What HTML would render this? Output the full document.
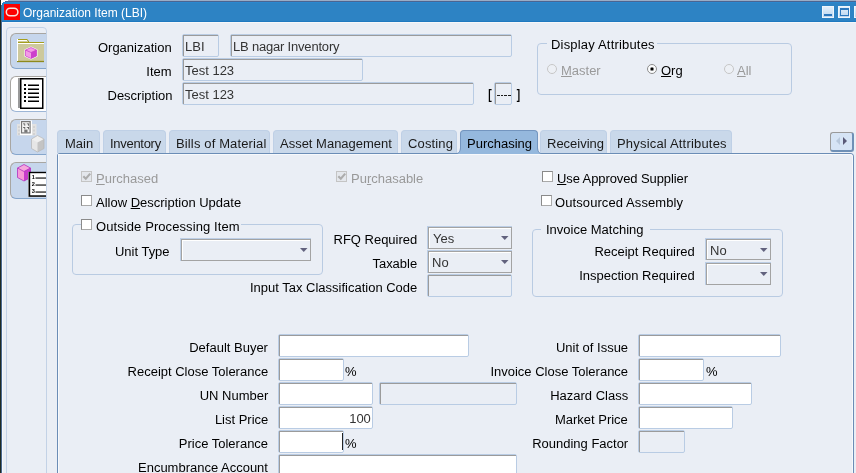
<!DOCTYPE html>
<html><head><meta charset="utf-8"><style>
html,body{margin:0;padding:0;}
body{width:856px;height:473px;overflow:hidden;position:relative;background:#eaeef5;font-family:"Liberation Sans", sans-serif;}
#root{position:absolute;left:0;top:0;width:856px;height:473px;overflow:hidden;will-change:transform;}
#root>div,#root>svg{position:absolute;box-sizing:content-box;}
.t{white-space:nowrap;line-height:1;}
.fo{border:1px solid #b9cce4;border-radius:2px;}
u{text-decoration:underline;text-underline-offset:1px;}
</style></head><body><div id="root">
<div style="left:0px;top:0px;width:856px;height:1px;background:#9aacc6"></div>
<div style="left:0px;top:1px;width:856px;height:1px;background:#4a6592"></div>
<div style="left:0px;top:2px;width:856px;height:19px;background:#2d83c4"></div>
<div style="left:0px;top:2px;width:856px;height:1px;background:#2a88d0"></div>
<div style="left:0px;top:21px;width:856px;height:1px;background:#1f79c0"></div>
<div style="left:0px;top:22px;width:856px;height:1px;background:#f6f7f9"></div>
<div style="left:0px;top:4px;width:1px;height:469px;background:#1f2a22"></div>
<div style="left:1px;top:4px;width:1px;height:469px;background:#4a6890"></div>
<div style="left:2px;top:23px;width:1px;height:450px;background:#f5f8fc"></div>
<svg style="position:absolute;left:0;top:0" width="8" height="5"><path d="M0 0H8V1H5V2H3V3H2V5H1V4H0Z" fill="#fff"/><path d="M0 0V5H1V0Z" fill="#1f2a22"/></svg>
<div style="left:4px;top:4px;width:16px;height:16px;background:#fc0000"></div>
<svg style="position:absolute;left:4px;top:4px" width="16" height="16"><rect x="2.3" y="4.2" width="11.6" height="7.6" rx="3.8" fill="none" stroke="#f6e2dc" stroke-width="1.5"/></svg>
<div class="t" style="left:23px;top:7.34px;font-size:12px;color:#fff;">Organization Item (LBI)</div>
<div style="left:822px;top:6px;width:12px;height:12px;background:linear-gradient(#e6f1fb,#b8d4ef);box-shadow:inset 0 0 0 1px #eef5fc"></div>
<div style="left:838px;top:6px;width:12px;height:12px;background:linear-gradient(#e6f1fb,#b8d4ef);box-shadow:inset 0 0 0 1px #eef5fc"></div>
<div style="left:854px;top:6px;width:12px;height:12px;background:linear-gradient(#e6f1fb,#b8d4ef);box-shadow:inset 0 0 0 1px #eef5fc"></div>
<div style="left:824px;top:14px;width:8px;height:2px;background:#2d78bd"></div>
<div style="left:840px;top:8px;width:9px;height:8px;border:1px solid #2d78bd;border-top-width:2px;box-sizing:border-box"></div>
<div style="left:6px;top:27px;width:39px;height:460px;border:1px solid #c3d2e6;border-radius:4px"></div>
<div style="left:10px;top:33px;width:37px;height:36px;background:#c6d6ec;border:1px solid #a8a6a2;border-right:none;border-bottom:1px solid #86a6cc;border-radius:6px 0 0 6px;box-sizing:border-box"></div>
<div style="left:10px;top:76px;width:37px;height:36px;background:#ffffff;border:1px solid #a8a6a2;border-right:none;border-bottom:1px solid #9db6d6;border-radius:6px 0 0 6px;box-sizing:border-box"></div>
<div style="left:10px;top:119px;width:37px;height:36px;background:#c6d6ec;border:1px solid #a8a6a2;border-right:none;border-bottom:1px solid #86a6cc;border-radius:6px 0 0 6px;box-sizing:border-box"></div>
<div style="left:10px;top:162px;width:37px;height:37px;background:#c6d6ec;border:1px solid #a8a6a2;border-right:none;border-bottom:1px solid #86a6cc;border-radius:6px 0 0 6px;box-sizing:border-box"></div>
<svg style="position:absolute;left:16px;top:38px" width="30" height="26">
<path d="M1 1H11L13 4H28V24H1Z" fill="#cdc99c"/>
<path d="M1 1.5H11.2L13.2 4.5" fill="none" stroke="#a59f1e" stroke-width="1"/>
<path d="M1 2.5H11" stroke="#fff" stroke-width="1"/>
<path d="M1 4.5H28" stroke="#a59f1e" stroke-width="1"/>
<path d="M1 5.5H28" stroke="#fff" stroke-width="1"/>
<path d="M1 23.5H28" stroke="#8e891c" stroke-width="1.3"/>
<path d="M1.5 1V23" stroke="#fff" stroke-width="1"/>
<path d="M8.5 11.5L15 8.5L21.5 11.5V18.5L15 21.5L8.5 18.5Z" fill="#fff"/>
<path d="M9.5 12L15 9.5L20.5 12V18L15 20.5L9.5 18Z" fill="#f39be6"/>
<path d="M15 14.5V20.5L20.5 18V12Z" fill="#cc3fcc"/>
<path d="M9.5 12L15 14.5L20.5 12" fill="none" stroke="#cc3fcc" stroke-width="0.8"/>
<path d="M9.5 12L15 9.5L20.5 12V18L15 20.5L9.5 18Z" fill="none" stroke="#c83cc8" stroke-width="0.7"/>
</svg>
<svg style="position:absolute;left:17px;top:77px" width="28" height="33">
<rect x="1" y="1" width="2" height="30" fill="#9a9a9a"/>
<rect x="3.75" y="1.75" width="22" height="29.5" fill="#fff" stroke="#000" stroke-width="1.5"/>
<g fill="#000"><rect x="7" y="7" width="2" height="2"/><rect x="7" y="11" width="2" height="2"/><rect x="7" y="15" width="2" height="2"/><rect x="7" y="19" width="2" height="2"/><rect x="7" y="23" width="2" height="2"/>
<rect x="11" y="7.5" width="11" height="1.5"/><rect x="11" y="11.5" width="11" height="1.5"/><rect x="11" y="15.5" width="11" height="1.5"/><rect x="11" y="19.5" width="11" height="1.5"/><rect x="11" y="23.5" width="11" height="1.5"/></g>
</svg>
<svg style="position:absolute;left:16px;top:120px" width="30" height="34">
<rect x="1" y="4" width="19.5" height="11.5" fill="#e2e2e2"/>
<g fill="#d2d2d2"><rect x="2" y="6" width="2" height="2"/><rect x="2" y="9.5" width="2" height="2"/><rect x="17" y="6" width="2" height="2"/><rect x="17" y="9.5" width="2" height="2"/><rect x="2" y="13" width="2" height="2"/><rect x="17" y="13" width="2" height="2"/></g>
<rect x="4" y="0.5" width="12" height="14.5" fill="#fff"/>
<rect x="5.5" y="1.6" width="8.6" height="11.3" fill="#f2f2f2" stroke="#787878" stroke-width="1.2"/>
<g fill="#555"><path d="M7 3.5H9.2V5.7H8.4V4.3H7Z"/><path d="M10.8 3.5H13V5.7H12.2V4.3H10.8Z"/><path d="M7 7H9.2V9.2H8.4V7.8H7Z"/><path d="M10.8 7H13V9.2H12.2V7.8H10.8Z"/><rect x="8.3" y="9.6" width="3.2" height="3" fill="#777"/></g>
<path d="M15.5 19L21.5 15.5L28 19V28.5L21.5 32L15.5 28.5Z" fill="#e6e6e6"/>
<path d="M15.5 19L21.5 15.5L28 19L21.5 22.5Z" fill="#efefef"/>
<path d="M21.5 22.5V32L28 28.5V19Z" fill="#c4c4c4"/>
<path d="M15.5 19L21.5 15.5L28 19V28.5L21.5 32L15.5 28.5Z" fill="none" stroke="#b4b4b4" stroke-width="0.7"/>
</svg>
<svg style="position:absolute;left:16px;top:163px" width="31" height="35">
<path d="M1.5 5L8 1.5L14.5 5V14.5L8 18L1.5 14.5Z" fill="#f79ad8"/>
<path d="M1.5 5L8 1.5L14.5 5L8 8.5Z" fill="#f6a6dc"/>
<path d="M8 8.5V18L14.5 14.5V5Z" fill="#c83ccc"/>
<path d="M1.5 5L8 1.5L14.5 5V14.5L8 18L1.5 14.5Z M1.5 5L8 8.5L14.5 5" fill="none" stroke="#b030c0" stroke-width="0.8"/>
<rect x="12" y="9" width="19" height="25" fill="#a0a0a0"/>
<rect x="13.5" y="9.5" width="18" height="23.5" fill="#fff" stroke="#000" stroke-width="1.4"/>
<g fill="#000" font-family="Liberation Sans" font-size="5.6" font-weight="bold"><text x="15.8" y="15.5">1</text><text x="15.8" y="22.5">2</text><text x="15.8" y="29.5">3</text></g>
<g fill="#000"><rect x="19.5" y="14.5" width="11" height="1.1"/><rect x="19.5" y="21.5" width="11" height="1.1"/><rect x="19.5" y="28.5" width="11" height="1.1"/></g>
</svg>
<div style="left:46px;top:33px;width:1px;height:440px;background:#c3d2e6"></div>
<div class="t" style="right:684px;top:40.9px;font-size:13.7px;color:#000;transform:scaleX(0.9489);transform-origin:right top;">Organization</div>
<div class="t" style="right:684px;top:64.9px;font-size:13.7px;color:#000;transform:scaleX(0.9489);transform-origin:right top;">Item</div>
<div class="t" style="right:684px;top:88.9px;font-size:13.7px;color:#000;transform:scaleX(0.9489);transform-origin:right top;">Description</div>
<div class="fo" style="left:182px;top:34px;width:35px;height:21px;background:#eaeef5"></div>
<div style="left:183px;top:35px;width:35px;height:21px;border-top:1px solid #9b9b9b;border-left:1px solid #9b9b9b;box-sizing:border-box"></div>
<div class="t" style="left:185px;top:39.9px;font-size:13.7px;color:#333;transform:scaleX(0.9489);transform-origin:left top;">LBI</div>
<div class="fo" style="left:230px;top:34px;width:280px;height:21px;background:#eaeef5"></div>
<div style="left:231px;top:35px;width:280px;height:21px;border-top:1px solid #9b9b9b;border-left:1px solid #9b9b9b;box-sizing:border-box"></div>
<div class="t" style="left:233px;top:39.9px;font-size:13.7px;color:#333;transform:scaleX(0.9489);transform-origin:left top;letter-spacing:-0.2px">LB nagar Inventory</div>
<div class="fo" style="left:182px;top:58px;width:179px;height:21px;background:#eaeef5"></div>
<div style="left:183px;top:59px;width:179px;height:21px;border-top:1px solid #9b9b9b;border-left:1px solid #9b9b9b;box-sizing:border-box"></div>
<div class="t" style="left:185px;top:63.9px;font-size:13.7px;color:#333;transform:scaleX(0.9489);transform-origin:left top;">Test 123</div>
<div class="fo" style="left:182px;top:82px;width:290px;height:21px;background:#eaeef5"></div>
<div style="left:183px;top:83px;width:290px;height:21px;border-top:1px solid #9b9b9b;border-left:1px solid #9b9b9b;box-sizing:border-box"></div>
<div class="t" style="left:185px;top:87.9px;font-size:13.7px;color:#333;transform:scaleX(0.9489);transform-origin:left top;">Test 123</div>
<svg style="position:absolute;left:486px;top:86px" width="36" height="18"><path d="M5.6 3.6H3.4V15.4H5.6" fill="none" stroke="#000" stroke-width="1.25"/><path d="M30.8 3.6H32.9V15.4H30.8" fill="none" stroke="#000" stroke-width="1.25"/></svg>
<div class="fo" style="left:494px;top:82px;width:16px;height:21px;background:#eaeef5"></div>
<div style="left:495px;top:83px;width:16px;height:21px;border-top:1px solid #9b9b9b;border-left:1px solid #9b9b9b;box-sizing:border-box"></div>
<div style="left:497px;top:95px;width:15px;height:1px;background:repeating-linear-gradient(90deg,#1a1a1a 0 2.7px,transparent 2.7px 3.75px)"></div>
<div style="left:537px;top:43px;width:253px;height:50px;border:1px solid #b9cbe2;border-radius:4px"></div>
<div style="left:547px;top:38px;width:110px;height:10px;background:#eaeef5"></div>
<div class="t" style="left:551px;top:37.9px;font-size:13.7px;color:#000;transform:scaleX(0.9489);transform-origin:left top;letter-spacing:0.2px">Display Attributes</div>
<svg style="position:absolute;left:547px;top:64px" width="10" height="10"><circle cx="5" cy="5" r="4.5" fill="#edf0f5" stroke="#c6c6c6" stroke-width="1"/></svg>
<div class="t" style="left:561px;top:63.9px;font-size:13.7px;color:#9a9a9a;transform:scaleX(0.9489);transform-origin:left top;"><u>M</u>aster</div>
<svg style="position:absolute;left:647px;top:64px" width="10" height="10"><circle cx="5" cy="5" r="4.5" fill="#fbfcfd" stroke="#8c8c8c" stroke-width="1"/><rect x="3.5" y="3.5" width="3" height="3" rx="0.6" fill="#000"/></svg>
<div class="t" style="left:661px;top:63.9px;font-size:13.7px;color:#000;transform:scaleX(0.9489);transform-origin:left top;"><u>O</u>rg</div>
<svg style="position:absolute;left:724px;top:64px" width="10" height="10"><circle cx="5" cy="5" r="4.5" fill="#edf0f5" stroke="#c6c6c6" stroke-width="1"/></svg>
<div class="t" style="left:737px;top:63.9px;font-size:13.7px;color:#9a9a9a;transform:scaleX(0.9489);transform-origin:left top;"><u>A</u>ll</div>
<div style="left:57px;top:153px;width:795px;height:330px;border-top:1px solid #6b8db6;border-left:1px solid #6b8db6;border-right:1px solid #6b8db6;border-top-right-radius:4px;border-top-left-radius:3px"></div>
<div style="left:58px;top:154px;width:793px;height:330px;border-top:1px solid #f7f9fc;border-left:1px solid #f7f9fc;border-right:1px solid #f7f9fc;border-top-right-radius:3px"></div>
<div style="left:57px;top:130px;width:41px;height:22px;background:#c9d8ea;border:1px solid #bfd0e6;border-bottom:none;border-radius:4px 4px 0 0"></div>
<div style="left:103px;top:130px;width:61px;height:22px;background:#c9d8ea;border:1px solid #bfd0e6;border-bottom:none;border-radius:4px 4px 0 0"></div>
<div style="left:169px;top:130px;width:99px;height:22px;background:#c9d8ea;border:1px solid #bfd0e6;border-bottom:none;border-radius:4px 4px 0 0"></div>
<div style="left:273px;top:130px;width:123px;height:22px;background:#c9d8ea;border:1px solid #bfd0e6;border-bottom:none;border-radius:4px 4px 0 0"></div>
<div style="left:401px;top:130px;width:54px;height:22px;background:#c9d8ea;border:1px solid #bfd0e6;border-bottom:none;border-radius:4px 4px 0 0"></div>
<div style="left:460px;top:130px;width:76px;height:23px;background:#95b8dd;border:1px solid #7395bf;border-bottom:none;border-radius:4px 4px 0 0"></div>
<svg style="position:absolute;left:457px;top:148px" width="4" height="6"><path d="M4 0V6H0Q3 5 3.5 0Z" fill="#95b8dd"/><path d="M0 5.5Q3 5 3.5 0" fill="none" stroke="#7395bf" stroke-width="1"/></svg>
<svg style="position:absolute;left:537px;top:148px" width="4" height="6"><path d="M0 0V6H4Q1 5 0.5 0Z" fill="#95b8dd"/><path d="M4 5.5Q1 5 0.5 0" fill="none" stroke="#7395bf" stroke-width="1"/></svg>
<div style="left:540px;top:130px;width:65px;height:22px;background:#c9d8ea;border:1px solid #bfd0e6;border-bottom:none;border-radius:4px 4px 0 0"></div>
<div style="left:610px;top:130px;width:120px;height:22px;background:#c9d8ea;border:1px solid #bfd0e6;border-bottom:none;border-radius:4px 4px 0 0"></div>
<div class="t" style="left:65px;top:136.9px;font-size:13.7px;color:#1a1a1a;transform:scaleX(0.9489);transform-origin:left top;letter-spacing:0">Main</div>
<div class="t" style="left:110px;top:136.9px;font-size:13.7px;color:#1a1a1a;transform:scaleX(0.9489);transform-origin:left top;letter-spacing:-0.3px">Inventory</div>
<div class="t" style="left:176px;top:136.9px;font-size:13.7px;color:#1a1a1a;transform:scaleX(0.9489);transform-origin:left top;letter-spacing:0.15px">Bills of Material</div>
<div class="t" style="left:280px;top:136.9px;font-size:13.7px;color:#1a1a1a;transform:scaleX(0.9489);transform-origin:left top;letter-spacing:0">Asset Management</div>
<div class="t" style="left:408px;top:136.9px;font-size:13.7px;color:#1a1a1a;transform:scaleX(0.9489);transform-origin:left top;letter-spacing:0.15px">Costing</div>
<div class="t" style="left:467px;top:136.9px;font-size:13.7px;color:#000;transform:scaleX(0.9489);transform-origin:left top;letter-spacing:0">Purchasing</div>
<div class="t" style="left:547px;top:136.9px;font-size:13.7px;color:#1a1a1a;transform:scaleX(0.9489);transform-origin:left top;letter-spacing:0">Receiving</div>
<div class="t" style="left:617px;top:136.9px;font-size:13.7px;color:#1a1a1a;transform:scaleX(0.9489);transform-origin:left top;letter-spacing:0.2px">Physical Attributes</div>
<div style="left:830px;top:132px;width:21px;height:17px;background:#d6e4f5;border:1px solid #9a9a9a;border-right:2px solid #6f90b6;border-bottom:2px solid #6f90b6;border-radius:3px"></div>
<svg style="position:absolute;left:834px;top:135px" width="16" height="12"><path d="M6 2L2 6L6 10Z" fill="#b8c8dc"/><path d="M9 2L13 6L9 10Z" fill="#5a5a78"/></svg>
<div style="left:81px;top:171px;width:9px;height:9px;border:1px solid #c4c4c4;background:#e4e7ec"></div>
<svg style="position:absolute;left:82px;top:172px" width="9" height="9"><path d="M1.3 4.2L3.8 6.8L8.2 1.6" stroke="#acacac" stroke-width="2.1" fill="none"/></svg>
<div class="t" style="left:96px;top:171.9px;font-size:13.7px;color:#999;transform:scaleX(0.9489);transform-origin:left top;"><u>P</u>urchased</div>
<div style="left:81px;top:195px;width:9px;height:9px;border:1px solid;border-color:#8a8a8a #a9a9a9 #a9a9a9 #8a8a8a;background:#fff"></div>
<div class="t" style="left:96px;top:195.9px;font-size:13.7px;color:#000;transform:scaleX(0.9489);transform-origin:left top;">Allow <u>D</u>escription Update</div>
<div style="left:336px;top:171px;width:9px;height:9px;border:1px solid #c4c4c4;background:#e4e7ec"></div>
<svg style="position:absolute;left:337px;top:172px" width="9" height="9"><path d="M1.3 4.2L3.8 6.8L8.2 1.6" stroke="#acacac" stroke-width="2.1" fill="none"/></svg>
<div class="t" style="left:351px;top:171.9px;font-size:13.7px;color:#999;transform:scaleX(0.9489);transform-origin:left top;">Pu<u>r</u>chasable</div>
<div style="left:542px;top:171px;width:9px;height:9px;border:1px solid;border-color:#8a8a8a #a9a9a9 #a9a9a9 #8a8a8a;background:#fff"></div>
<div class="t" style="left:557px;top:171.9px;font-size:13.7px;color:#000;transform:scaleX(0.9489);transform-origin:left top;letter-spacing:-0.1px"><u>U</u>se Approved Supplier</div>
<div style="left:541px;top:195px;width:9px;height:9px;border:1px solid;border-color:#8a8a8a #a9a9a9 #a9a9a9 #8a8a8a;background:#fff"></div>
<div class="t" style="left:555px;top:195.9px;font-size:13.7px;color:#000;transform:scaleX(0.9489);transform-origin:left top;letter-spacing:0.1px">Outsourced Assembly</div>
<div style="left:72px;top:224px;width:249px;height:49px;border:1px solid #b9cbe2;border-radius:4px"></div>
<div style="left:81px;top:218px;width:160px;height:10px;background:#eaeef5"></div>
<div style="left:81px;top:219px;width:9px;height:9px;border:1px solid;border-color:#8a8a8a #a9a9a9 #a9a9a9 #8a8a8a;background:#fff"></div>
<div class="t" style="left:96px;top:219.9px;font-size:13.7px;color:#000;transform:scaleX(0.9489);transform-origin:left top;letter-spacing:0.1px">Outside Processing Item</div>
<div class="t" style="right:686px;top:244.9px;font-size:13.7px;color:#000;transform:scaleX(0.9489);transform-origin:right top;">Unit Type</div>
<div style="left:180px;top:238px;width:131px;height:1px;background:#bccee6"></div>
<div style="left:180px;top:238px;width:1px;height:23px;background:#bccee6"></div>
<div style="left:181px;top:239px;width:130px;height:22px;border:1px solid #a3a3a3;box-sizing:border-box;background:#eaeef5"></div>
<div style="left:182px;top:240px;width:128px;height:20px;border-top:1px solid #fff;border-left:1px solid #fff;box-sizing:border-box"></div>
<svg style="position:absolute;left:300px;top:248px" width="8" height="5"><path d="M0 0H7.5L3.75 4Z" fill="#62627e"/></svg>
<div class="t" style="right:439px;top:232.9px;font-size:13.7px;color:#000;transform:scaleX(0.9489);transform-origin:right top;">RFQ Required</div>
<div style="left:427px;top:226px;width:85px;height:1px;background:#bccee6"></div>
<div style="left:427px;top:226px;width:1px;height:23px;background:#bccee6"></div>
<div style="left:428px;top:227px;width:84px;height:22px;border:1px solid #a3a3a3;box-sizing:border-box;background:#eaeef5"></div>
<div style="left:429px;top:228px;width:82px;height:20px;border-top:1px solid #fff;border-left:1px solid #fff;box-sizing:border-box"></div>
<svg style="position:absolute;left:501px;top:236px" width="8" height="5"><path d="M0 0H7.5L3.75 4Z" fill="#62627e"/></svg>
<div class="t" style="left:433px;top:231.9px;font-size:13.7px;color:#333;transform:scaleX(0.9489);transform-origin:left top;">Yes</div>
<div class="t" style="right:439px;top:256.9px;font-size:13.7px;color:#000;transform:scaleX(0.9489);transform-origin:right top;">Taxable</div>
<div style="left:427px;top:250px;width:85px;height:1px;background:#bccee6"></div>
<div style="left:427px;top:250px;width:1px;height:23px;background:#bccee6"></div>
<div style="left:428px;top:251px;width:84px;height:22px;border:1px solid #a3a3a3;box-sizing:border-box;background:#eaeef5"></div>
<div style="left:429px;top:252px;width:82px;height:20px;border-top:1px solid #fff;border-left:1px solid #fff;box-sizing:border-box"></div>
<svg style="position:absolute;left:501px;top:260px" width="8" height="5"><path d="M0 0H7.5L3.75 4Z" fill="#62627e"/></svg>
<div class="t" style="left:432px;top:255.9px;font-size:13.7px;color:#333;transform:scaleX(0.9489);transform-origin:left top;">No</div>
<div class="t" style="right:439px;top:280.9px;font-size:13.7px;color:#000;transform:scaleX(0.9489);transform-origin:right top;">Input Tax Classification Code</div>
<div class="fo" style="left:427px;top:274px;width:83px;height:21px;background:#eaeef5"></div>
<div style="left:428px;top:275px;width:83px;height:21px;border-top:1px solid #9b9b9b;border-left:1px solid #9b9b9b;box-sizing:border-box"></div>
<div style="left:532px;top:229px;width:249px;height:66px;border:1px solid #b9cbe2;border-radius:4px"></div>
<div style="left:541px;top:222px;width:109px;height:12px;background:#eaeef5"></div>
<div class="t" style="left:546px;top:222.9px;font-size:13.7px;color:#000;transform:scaleX(0.9489);transform-origin:left top;">Invoice Matching</div>
<div class="t" style="right:161px;top:244.9px;font-size:13.7px;color:#000;transform:scaleX(0.9489);transform-origin:right top;">Receipt Required</div>
<div style="left:705px;top:238px;width:66px;height:1px;background:#bccee6"></div>
<div style="left:705px;top:238px;width:1px;height:22px;background:#bccee6"></div>
<div style="left:706px;top:239px;width:65px;height:21px;border:1px solid #a3a3a3;box-sizing:border-box;background:#eaeef5"></div>
<div style="left:707px;top:240px;width:63px;height:19px;border-top:1px solid #fff;border-left:1px solid #fff;box-sizing:border-box"></div>
<svg style="position:absolute;left:760px;top:248px" width="8" height="5"><path d="M0 0H7.5L3.75 4Z" fill="#62627e"/></svg>
<div class="t" style="left:710px;top:243.9px;font-size:13.7px;color:#333;transform:scaleX(0.9489);transform-origin:left top;">No</div>
<div class="t" style="right:161px;top:268.9px;font-size:13.7px;color:#000;transform:scaleX(0.9489);transform-origin:right top;">Inspection Required</div>
<div style="left:705px;top:262px;width:66px;height:1px;background:#bccee6"></div>
<div style="left:705px;top:262px;width:1px;height:23px;background:#bccee6"></div>
<div style="left:706px;top:263px;width:65px;height:22px;border:1px solid #a3a3a3;box-sizing:border-box;background:#eaeef5"></div>
<div style="left:707px;top:264px;width:63px;height:20px;border-top:1px solid #fff;border-left:1px solid #fff;box-sizing:border-box"></div>
<svg style="position:absolute;left:760px;top:272px" width="8" height="5"><path d="M0 0H7.5L3.75 4Z" fill="#62627e"/></svg>
<div class="t" style="right:588px;top:340.9px;font-size:13.7px;color:#000;transform:scaleX(0.9489);transform-origin:right top;">Default Buyer</div>
<div class="t" style="right:588px;top:364.9px;font-size:13.7px;color:#000;transform:scaleX(0.9489);transform-origin:right top;">Receipt Close Tolerance</div>
<div class="t" style="right:588px;top:388.9px;font-size:13.7px;color:#000;transform:scaleX(0.9489);transform-origin:right top;">UN Number</div>
<div class="t" style="right:588px;top:412.9px;font-size:13.7px;color:#000;transform:scaleX(0.9489);transform-origin:right top;">List Price</div>
<div class="t" style="right:588px;top:436.9px;font-size:13.7px;color:#000;transform:scaleX(0.9489);transform-origin:right top;">Price Tolerance</div>
<div class="t" style="right:588px;top:460.9px;font-size:13.7px;color:#000;transform:scaleX(0.9489);transform-origin:right top;">Encumbrance Account</div>
<div class="fo" style="left:278px;top:334px;width:189px;height:21px;background:#fff"></div>
<div style="left:279px;top:335px;width:189px;height:21px;border-top:1px solid #9b9b9b;border-left:1px solid #9b9b9b;box-sizing:border-box"></div>
<div class="fo" style="left:278px;top:358px;width:64px;height:21px;background:#fff"></div>
<div style="left:279px;top:359px;width:64px;height:21px;border-top:1px solid #9b9b9b;border-left:1px solid #9b9b9b;box-sizing:border-box"></div>
<div class="t" style="left:345px;top:364.9px;font-size:13.7px;color:#000;transform:scaleX(0.9489);transform-origin:left top;letter-spacing:-1px">%</div>
<div class="fo" style="left:278px;top:382px;width:93px;height:21px;background:#fff"></div>
<div style="left:279px;top:383px;width:93px;height:21px;border-top:1px solid #9b9b9b;border-left:1px solid #9b9b9b;box-sizing:border-box"></div>
<div class="fo" style="left:379px;top:382px;width:136px;height:21px;background:#eaeef5"></div>
<div style="left:380px;top:383px;width:136px;height:21px;border-top:1px solid #9b9b9b;border-left:1px solid #9b9b9b;box-sizing:border-box"></div>
<div class="fo" style="left:278px;top:406px;width:93px;height:21px;background:#fff"></div>
<div style="left:279px;top:407px;width:93px;height:21px;border-top:1px solid #9b9b9b;border-left:1px solid #9b9b9b;box-sizing:border-box"></div>
<div class="t" style="right:485px;top:411.9px;font-size:13.7px;color:#333;transform:scaleX(0.9489);transform-origin:right top;">100</div>
<div class="fo" style="left:278px;top:430px;width:64px;height:21px;background:#fff"></div>
<div style="left:279px;top:431px;width:64px;height:21px;border-top:1px solid #9b9b9b;border-left:1px solid #9b9b9b;box-sizing:border-box"></div>
<div class="t" style="left:345px;top:436.9px;font-size:13.7px;color:#000;transform:scaleX(0.9489);transform-origin:left top;letter-spacing:-1px">%</div>
<div style="left:342px;top:433px;width:1px;height:17px;background:#222"></div>
<div class="fo" style="left:278px;top:454px;width:237px;height:21px;background:#fff"></div>
<div style="left:279px;top:455px;width:237px;height:21px;border-top:1px solid #9b9b9b;border-left:1px solid #9b9b9b;box-sizing:border-box"></div>
<div class="t" style="right:228px;top:340.9px;font-size:13.7px;color:#000;transform:scaleX(0.9489);transform-origin:right top;">Unit of Issue</div>
<div class="t" style="right:228px;top:364.9px;font-size:13.7px;color:#000;transform:scaleX(0.9489);transform-origin:right top;">Invoice Close Tolerance</div>
<div class="t" style="right:228px;top:388.9px;font-size:13.7px;color:#000;transform:scaleX(0.9489);transform-origin:right top;">Hazard Class</div>
<div class="t" style="right:228px;top:412.9px;font-size:13.7px;color:#000;transform:scaleX(0.9489);transform-origin:right top;">Market Price</div>
<div class="t" style="right:228px;top:436.9px;font-size:13.7px;color:#000;transform:scaleX(0.9489);transform-origin:right top;">Rounding Factor</div>
<div class="fo" style="left:638px;top:334px;width:141px;height:21px;background:#fff"></div>
<div style="left:639px;top:335px;width:141px;height:21px;border-top:1px solid #9b9b9b;border-left:1px solid #9b9b9b;box-sizing:border-box"></div>
<div class="fo" style="left:638px;top:358px;width:64px;height:21px;background:#fff"></div>
<div style="left:639px;top:359px;width:64px;height:21px;border-top:1px solid #9b9b9b;border-left:1px solid #9b9b9b;box-sizing:border-box"></div>
<div class="t" style="left:706px;top:364.9px;font-size:13.7px;color:#000;transform:scaleX(0.9489);transform-origin:left top;letter-spacing:-1px">%</div>
<div class="fo" style="left:638px;top:382px;width:112px;height:21px;background:#fff"></div>
<div style="left:639px;top:383px;width:112px;height:21px;border-top:1px solid #9b9b9b;border-left:1px solid #9b9b9b;box-sizing:border-box"></div>
<div class="fo" style="left:638px;top:406px;width:93px;height:21px;background:#fff"></div>
<div style="left:639px;top:407px;width:93px;height:21px;border-top:1px solid #9b9b9b;border-left:1px solid #9b9b9b;box-sizing:border-box"></div>
<div class="fo" style="left:638px;top:430px;width:45px;height:21px;background:#eaeef5"></div>
<div style="left:639px;top:431px;width:45px;height:21px;border-top:1px solid #9b9b9b;border-left:1px solid #9b9b9b;box-sizing:border-box"></div>
</div></body></html>
